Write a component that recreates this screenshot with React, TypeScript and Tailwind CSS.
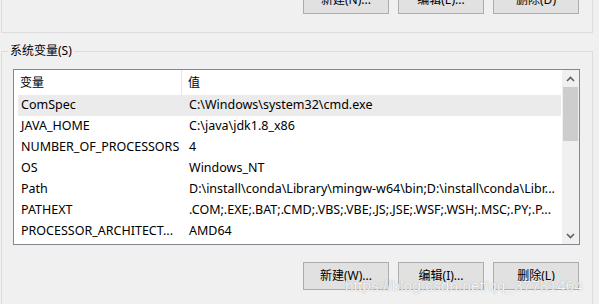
import React from "react";

const rows: [string, string][] = [
  ["ComSpec", "C:\\Windows\\system32\\cmd.exe"],
  ["JAVA_HOME", "C:\\java\\jdk1.8_x86"],
  ["NUMBER_OF_PROCESSORS", "4"],
  ["OS", "Windows_NT"],
  ["Path", "D:\\install\\conda\\Library\\mingw-w64\\bin;D:\\install\\conda\\Libr..."],
  ["PATHEXT", ".COM;.EXE;.BAT;.CMD;.VBS;.VBE;.JS;.JSE;.WSF;.WSH;.MSC;.PY;.P..."],
  ["PROCESSOR_ARCHITECT...", "AMD64"],
];

function Btn({ label }: { label: string }) {
  return (
    <div className="w-[86px] h-[28px] bg-[#e1e1e1] border border-[#adadad] flex items-center justify-center text-[12px] text-black">
      {label}
    </div>
  );
}

export default function App() {
  return (
    <div
      className="relative w-[599px] h-[304px] bg-[#f0f0f0] overflow-hidden text-black"
      style={{ fontFamily: "'Noto Sans', 'Noto Sans CJK SC', sans-serif" }}
    >
      {/* upper group box */}
      <div className="ml-px w-[592px] h-[47px] -mt-[14px] border-l border-r border-b border-[#dcdcdc] flex justify-end gap-[9px] pr-[13px]">
        <Btn label="新建(N)..." />
        <Btn label="编辑(E)..." />
        <Btn label="删除(D)" />
      </div>

      {/* lower group box */}
      <div className="relative ml-px mt-[18px] w-[592px] h-[300px] border-l border-r border-t border-[#dcdcdc]">
        <div className="absolute left-[6px] -top-[9px] px-[2px] bg-[#f0f0f0] text-[12px] leading-[16px]">
          系统变量(S)
        </div>

        {/* list view */}
        <div className="ml-[11px] mt-[17px] w-[567px] h-[176px] border border-[#828790] bg-white flex">
          <div className="flex-1 flex flex-col">
            <div className="h-[25px] flex text-[12px]">
              <div className="w-[168px] pl-[6px] flex items-center border-r border-[#e5e5e5]">变量</div>
              <div className="flex-1 pl-[6px] flex items-center">值</div>
            </div>
            <div className="flex flex-col pl-[4px] pr-[1px]">
              {rows.map(([k, v], i) => (
                <div
                  key={k}
                  className={`h-[21px] flex items-center text-[12.5px] whitespace-nowrap ${i === 0 ? "bg-[#ebebeb]" : ""}`}
                >
                  <div className="w-[168px] pl-[3px] overflow-hidden">{k}</div>
                  <div className="flex-1 pl-[3px] overflow-hidden">{v}</div>
                </div>
              ))}
            </div>
          </div>
          {/* scrollbar */}
          <div className="w-[17px] bg-[#f0f0f0] flex flex-col">
            <div className="h-[17px] flex items-center justify-center">
              <svg width="9" height="6" viewBox="0 0 9 6">
                <path d="M1 5 L4.5 1.5 L8 5" stroke="#606060" strokeWidth="1.6" fill="none" />
              </svg>
            </div>
            <div className="h-[54px] mx-px bg-[#cdcdcd]" />
            <div className="flex-1" />
            <div className="h-[17px] flex items-center justify-center">
              <svg width="9" height="6" viewBox="0 0 9 6">
                <path d="M1 1 L4.5 4.5 L8 1" stroke="#606060" strokeWidth="1.6" fill="none" />
              </svg>
            </div>
          </div>
        </div>

        <div className="mt-[17px] flex justify-end gap-[9px] pr-[13px]">
          <Btn label="新建(W)..." />
          <Btn label="编辑(I)..." />
          <Btn label="删除(L)" />
        </div>
      </div>

      {/* watermark */}
      <div
        className="absolute left-[345px] top-[274px] text-[15.5px] text-white/90 whitespace-nowrap"
        style={{ fontFamily: "'Liberation Sans', sans-serif", textShadow: "0 0 1px rgba(90,90,90,0.6)" }}
      >
        https://blog.csdn.net/qq_37781464
      </div>
    </div>
  );
}
